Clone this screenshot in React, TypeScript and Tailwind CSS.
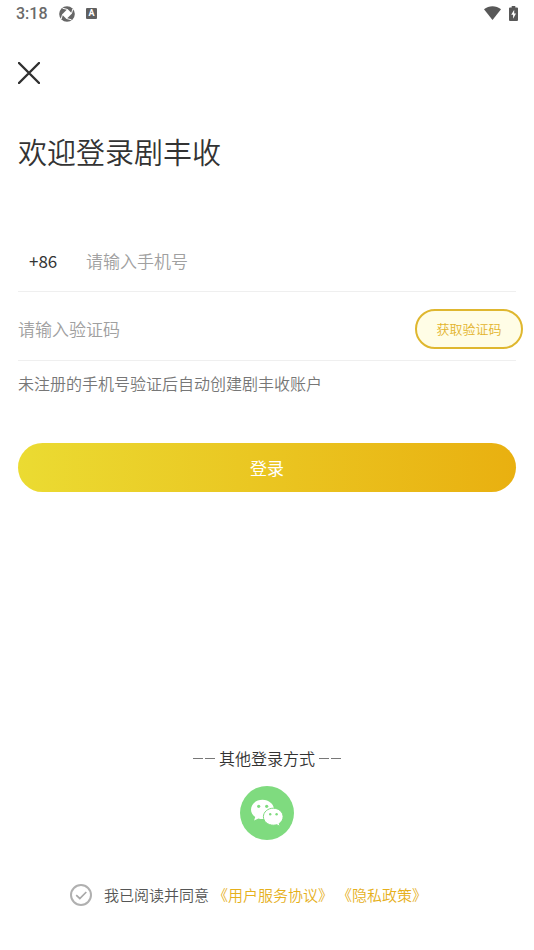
import { useState } from "react";

function ApertureIcon() {
  return (
    <svg className="h-4 w-4" viewBox="0 0 16 16" aria-hidden="true">
      <circle cx="8" cy="8" r="7.8" fill="#666" />
      <path d="M8.500 3 13 7.500 7.500 13 3 8.500Z" fill="#fff" />
      <path
        d="M8.500 3.500 3.500 2.200M12.500 7.500 13.800 3M7.500 12.500 12.500 13.800M3.500 8.500 2.200 13"
        stroke="#fff"
        strokeWidth="1"
      />
    </svg>
  );
}

function LetterIcon() {
  return (
    <span className="flex h-[11px] w-[11px] items-center justify-center rounded-[1px] bg-[#606060] text-[9px] leading-none font-bold text-white">
      A
    </span>
  );
}

function StatusBar() {
  return (
    <header className="flex h-7 items-center justify-between pr-4 pl-4 text-[#6a6a6a]">
      <div className="flex items-center pb-px font-['Roboto',sans-serif]">
        <span className="w-[43px] text-base leading-5 font-medium">3:18</span>
        <ApertureIcon />
        <span className="ml-[11px]">
          <LetterIcon />
        </span>
      </div>
      <div className="flex items-center gap-2 pb-0.5">
        <svg className="h-[14px] w-[17px]" viewBox="0 0 17 14" aria-hidden="true">
          <path d="M0 3.2C5 -.9 12 -.9 17 3.2L8.500 14Z" fill="#585858" />
        </svg>
        <svg className="h-[15px] w-[9px]" viewBox="0 0 9 15" aria-hidden="true">
          <path d="M2.700 0h3.600v1.500H8a1 1 0 0 1 1 1V14a1 1 0 0 1-1 1H1a1 1 0 0 1-1-1V2.500a1 1 0 0 1 1-1h1.700Z" fill="#585858" />
          <path d="M5.200 3.700 2.200 8.700h1.900v4L7 7.600H5.200Z" fill="#fff" />
        </svg>
      </div>
    </header>
  );
}

function WeChatIcon() {
  return (
    <svg className="h-[54px] w-[54px]" viewBox="0 0 54 54" aria-hidden="true">
      <circle cx="27" cy="27" r="27" fill="#7fdb7f" />
      <path
        d="M22.500 13.700c-6.400 0-11.500 4.300-11.500 9.800 0 3.100 1.600 5.700 4.200 7.500l-1.100 3.600 4.300-2.200c1.300.4 2.700.6 4.100.6 6.400 0 11.500-4.200 11.500-9.500s-5.100-9.800-11.500-9.800Z"
        fill="#fff"
      />
      <path
        d="M33.300 22.200c-5.500 0-9.900 3.800-9.900 8.500s4.400 8.500 9.900 8.500c1.200 0 2.400-.2 3.500-.5l3.300 1.800-.9-3c2.400-1.600 3.900-4 3.900-6.800 0-4.700-4.300-8.500-9.800-8.500Z"
        fill="#fff"
        stroke="#7fdb7f"
        strokeWidth="1"
      />
      <g fill="#7fdb7f">
        <circle cx="18.700" cy="20.300" r="1.600" />
        <circle cx="26.700" cy="20.300" r="1.600" />
        <circle cx="30.200" cy="28.300" r="1.200" />
        <circle cx="36.600" cy="28.300" r="1.200" />
      </g>
    </svg>
  );
}

function Dashes() {
  return (
    <span className="flex gap-0.5" aria-hidden="true">
      <i className="h-px w-[10px] bg-[#777]" />
      <i className="h-px w-[10px] bg-[#777]" />
    </span>
  );
}

export default function App() {
  const [agreed, setAgreed] = useState(true);

  return (
    <div className="flex min-h-screen flex-col bg-white font-['Noto_Sans_CJK_SC',sans-serif] font-[350] text-[#333]">
      <StatusBar />
      <main className="flex flex-1 flex-col px-[18px]">
        <button type="button" aria-label="关闭" className="mt-[34px] h-[22px] w-[22px]">
          <svg className="h-[22px] w-[22px]" viewBox="0 0 22 22" aria-hidden="true">
            <path d="M1 1 21 21M21 1 1 21" stroke="#303030" strokeWidth="2.400" strokeLinecap="round" />
          </svg>
        </button>

        <h1 className="mt-[47px] text-[29px] leading-10 font-[350]">欢迎登录剧丰收</h1>

        <form onSubmit={(event) => event.preventDefault()}>
          <div className="mt-[61px] flex h-[60px] items-center border-b border-[#efefef] pb-0.5 text-[17px] leading-6">
            <span className="w-[68px] pl-[11px] font-normal">+86</span>
            <input
              type="tel"
              aria-label="手机号"
              placeholder="请输入手机号"
              className="min-w-0 flex-1 outline-none placeholder:text-[#a0a0a0]"
            />
          </div>
          <div className="flex h-[69px] items-center border-b border-[#efefef] pt-1.5 text-[17px] leading-6">
            <input
              type="text"
              aria-label="验证码"
              placeholder="请输入验证码"
              className="min-w-0 flex-1 outline-none placeholder:text-[#a0a0a0]"
            />
            <button
              type="button"
              className="-mr-[7px] h-10 w-[108px] rounded-full border-2 border-[#dfb72f] bg-[#fffde6] text-[13px] leading-5 text-[#e3b42c]"
            >
              获取验证码
            </button>
          </div>
          <p className="mt-2.5 text-base leading-6 text-[#777]">未注册的手机号验证后自动创建剧丰收账户</p>
          <button
            type="submit"
            className="mt-12 h-[49px] w-full rounded-full bg-linear-to-r/srgb from-[#ebdb32] to-[#e9b010] text-[17px] leading-6 font-normal text-white"
          >
            登录
          </button>
        </form>

        <section className="mt-auto flex flex-col items-center">
          <h2 className="flex items-center gap-1 text-base leading-6 font-[350]">
            <Dashes />
            其他登录方式
            <Dashes />
          </h2>
          <button type="button" aria-label="微信登录" className="mt-4 rounded-full">
            <WeChatIcon />
          </button>
        </section>

        <div className="mt-[43px] mb-[43px] flex items-center pl-[52px] text-[15px] leading-6">
          <span className="relative mr-3 flex h-[22px] w-[22px] shrink-0">
            <input
              id="agree"
              type="checkbox"
              checked={agreed}
              onChange={(event) => setAgreed(event.target.checked)}
              className="h-[22px] w-[22px] appearance-none rounded-full border-2 border-[#b0b0b0]"
            />
            {agreed && (
              <svg className="pointer-events-none absolute inset-0" viewBox="0 0 22 22" aria-hidden="true">
                <path d="M6.200 11.200 9.800 14.500 16.300 8" fill="none" stroke="#a8a8a8" strokeWidth="1.700" />
              </svg>
            )}
          </span>
          <div className="flex gap-1 whitespace-nowrap">
            <label htmlFor="agree" className="text-[#555]">
              我已阅读并同意
            </label>
            <a href="#terms" className="text-[#e6b01c]">
              《用户服务协议》
            </a>
            <a href="#privacy" className="text-[#e6b01c]">
              《隐私政策》
            </a>
          </div>
        </div>
      </main>
    </div>
  );
}
